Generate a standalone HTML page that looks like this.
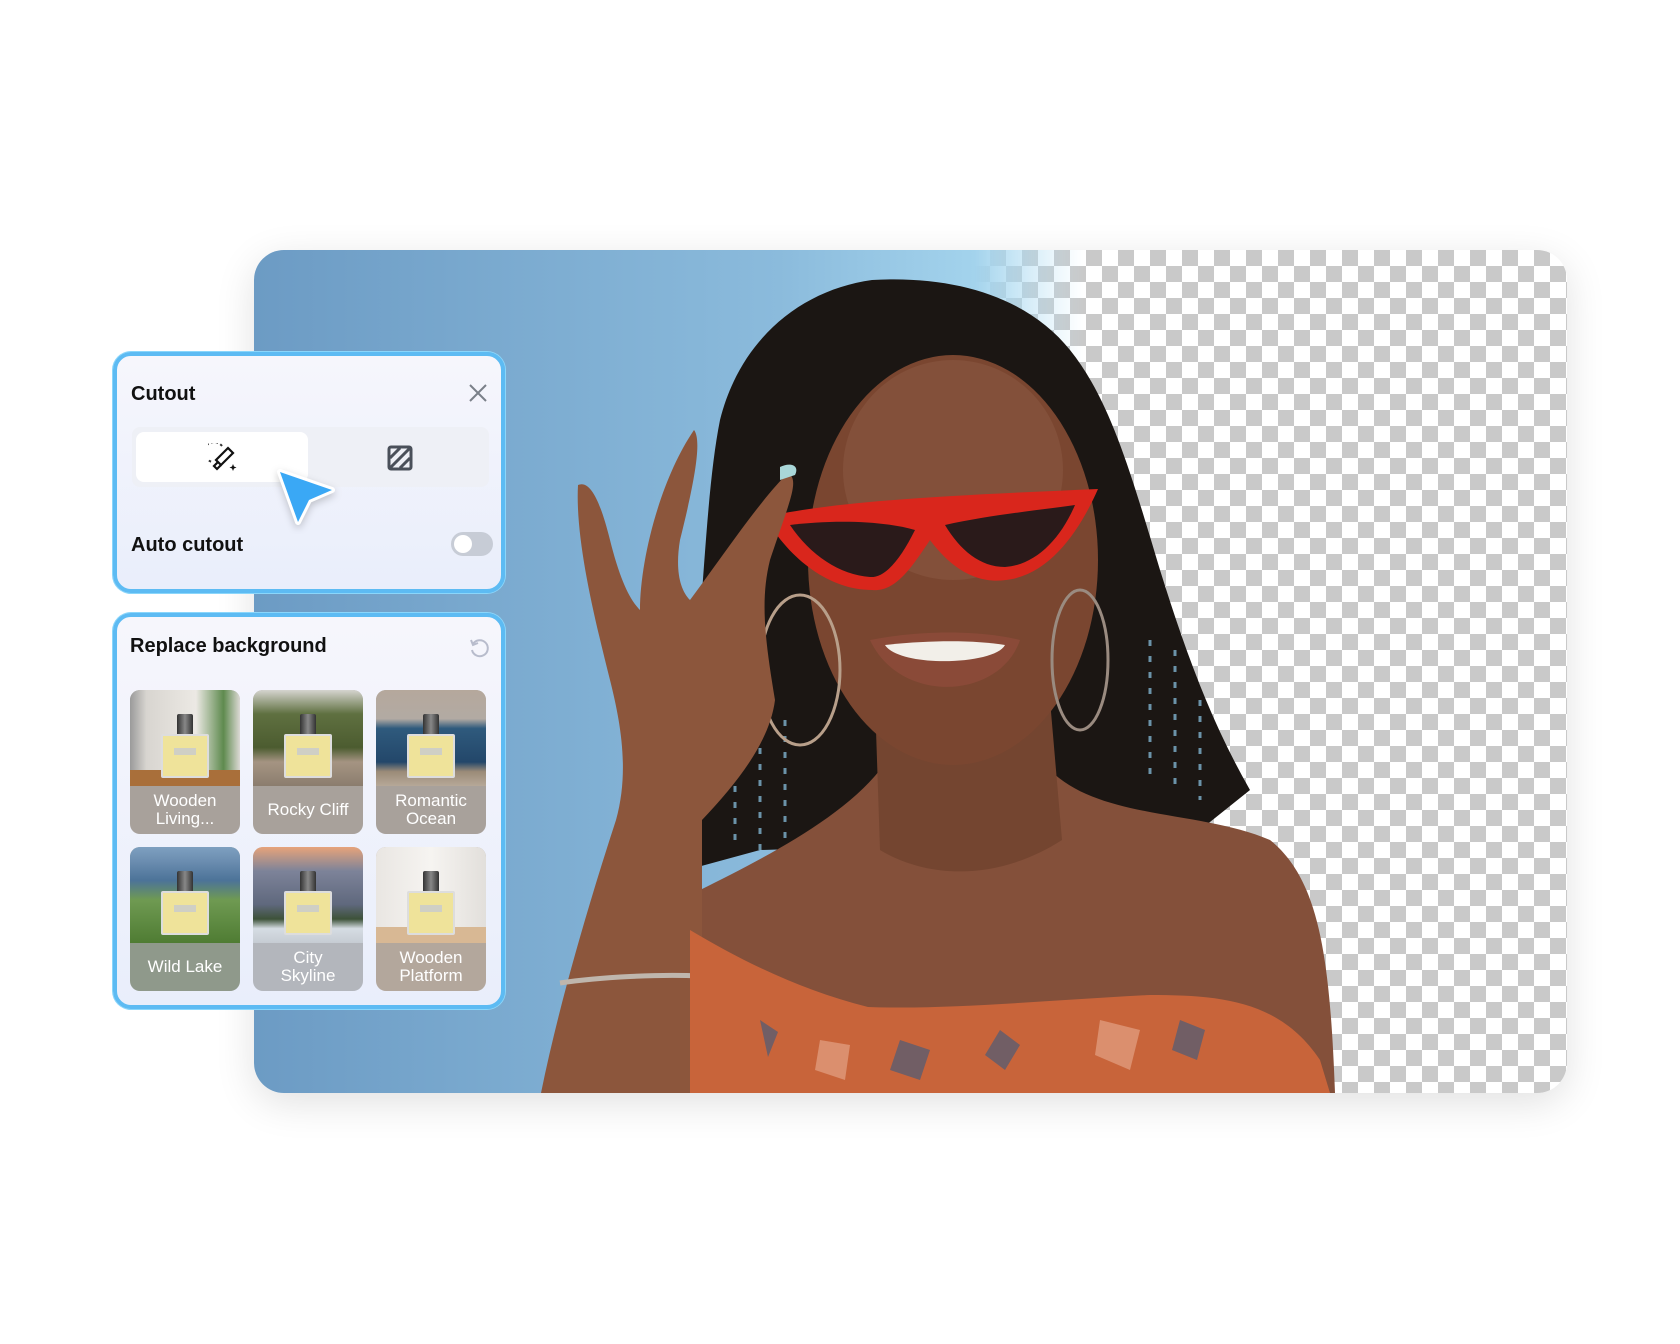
<!DOCTYPE html>
<html><head><meta charset="utf-8"><style>
*{margin:0;padding:0;box-sizing:border-box}
body{width:1680px;height:1344px;background:#fff;position:relative;overflow:hidden;font-family:"Liberation Sans",sans-serif}
.card{position:absolute;left:254px;top:250px;width:1313px;height:843px;border-radius:30px;overflow:hidden;box-shadow:0 10px 40px rgba(0,0,0,.12);
background:linear-gradient(90deg,#6c9bc4 0%,#8bbbdc 40%,#a8d8f0 58%,#c4e6f6 65%,#fff 68%)}
.checker{position:absolute;left:720px;top:0;right:0;bottom:0;
background-color:#fff;background-image:linear-gradient(45deg,#c9c9c9 25%,transparent 25%,transparent 75%,#c9c9c9 75%),linear-gradient(45deg,#c9c9c9 25%,transparent 25%,transparent 75%,#c9c9c9 75%);
background-size:32px 32px;background-position:0 0,16px 16px;
-webkit-mask-image:linear-gradient(90deg,transparent 0,#000 110px);mask-image:linear-gradient(90deg,transparent 0,#000 110px)}
.panel{position:absolute;left:113px;width:392px;border:4px solid #5dbbf3;border-radius:18px;background:linear-gradient(180deg,#f6f6fc,#e9eefb);box-shadow:0 0 0 1px #8ad6fb}
.title{position:absolute;font-size:20px;font-weight:bold;color:#111}
.tile{position:absolute;width:110px;height:144px;border-radius:10px;overflow:hidden;background:#a8a19b}
.tile .img{position:absolute;left:0;top:0;width:110px;height:96px}
.tile .lab{position:absolute;left:0;top:96px;width:110px;height:48px;color:#fff;font-size:17px;line-height:18px;text-align:center;display:flex;align-items:center;justify-content:center}
.bottle{position:absolute;left:31px;top:24px;width:48px;height:64px}
.bottle .cap{position:absolute;left:16px;top:0;width:16px;height:22px;background:linear-gradient(90deg,#333,#888,#333);border-radius:2px}
.bottle .body{position:absolute;left:0;top:20px;width:48px;height:44px;background:#efe39a;border:2px solid #ddd;border-radius:2px}
.bottle .tag{position:absolute;left:11px;top:12px;width:22px;height:7px;background:#cfcfc5}
</style></head><body>
<div class="card">
<div class="checker"></div>
<svg width="1313" height="843" viewBox="254 250 1313 843" style="position:absolute;left:0;top:0">
<!-- hair -->
<path d="M720,420 C740,340 800,290 872,280 C960,275 1030,300 1070,350 C1110,400 1130,470 1160,570 C1185,650 1210,720 1250,790 L1200,830 L1100,840 L760,850 L650,880 L614,880 C630,800 660,700 700,620 C706,540 710,470 720,420Z" fill="#1b1613"/>
<g stroke="#7fb3cf" stroke-width="3" stroke-dasharray="6 10" opacity=".8">
<path d="M735,690 L735,850 M760,700 L760,860 M785,720 L785,860 M1150,640 L1150,780 M1175,650 L1175,790 M1200,700 L1200,800"/>
</g>
<!-- body skin -->
<path d="M560,1093 C600,990 640,920 700,890 C760,860 840,820 880,770 L1050,770 C1100,820 1200,810 1270,840 C1320,880 1330,960 1335,1093Z" fill="#84503a"/>
<!-- neck -->
<path d="M875,700 L1050,700 L1062,840 C1000,880 930,880 880,850Z" fill="#744530"/>
<!-- face -->
<ellipse cx="953" cy="560" rx="145" ry="205" fill="#7a4630"/>
<ellipse cx="953" cy="470" rx="110" ry="110" fill="#83503a"/>
<!-- earrings -->
<ellipse cx="800" cy="670" rx="40" ry="75" fill="none" stroke="#b89f8a" stroke-width="3"/>
<ellipse cx="1080" cy="660" rx="28" ry="70" fill="none" stroke="#9a8b80" stroke-width="3"/>
<!-- mouth -->
<path d="M870,640 C920,630 980,630 1020,640 C1000,700 900,705 870,640Z" fill="#8a4a38"/>
<path d="M885,645 C930,640 975,640 1005,645 C995,665 900,668 885,645Z" fill="#f2efe9"/>
<!-- glasses -->
<path d="M765,517 C840,500 960,495 1098,489 C1080,530 1050,575 1006,580 C970,585 945,560 930,540 C910,570 895,592 872,590 C830,590 790,560 765,517Z" fill="#d9261c"/>
<path d="M790,525 C830,520 880,520 915,530 C900,560 885,578 870,577 C840,575 810,555 790,525Z" fill="#2a1a1a"/>
<path d="M945,525 C990,515 1040,510 1075,505 C1060,540 1035,565 1005,567 C980,567 960,550 945,525Z" fill="#2a1a1a"/>
<!-- arm/hand -->
<path d="M541,1093 C560,1000 590,900 616,820 C630,770 620,720 610,680 C595,620 575,540 578,485 C590,480 600,500 610,540 C620,580 630,600 640,610 C640,560 660,480 694,430 C702,440 695,480 680,540 C675,570 680,590 690,600 C720,560 760,500 788,473 C800,480 790,500 770,560 C760,600 765,640 775,700 C770,740 740,780 702,820 L702,1000 L690,1093Z" fill="#8c563c"/>
<path d="M780,467 C790,462 800,465 795,475 L780,480Z" fill="#a9d6d8"/>
<!-- bracelet -->
<path d="M560,983 C600,977 660,974 700,976" stroke="#bfb6ad" stroke-width="5" fill="none"/>
<!-- top -->
<path d="M690,930 C740,960 800,990 868,1007 C950,1010 1050,1000 1150,995 C1220,995 1280,1000 1320,1060 L1330,1093 L690,1093Z" fill="#c8643a"/>
<path d="M900,1040 l30,10 l-10,30 l-30,-10Z M1000,1030 l20,15 l-15,25 l-20,-15Z M1180,1020 l25,10 l-8,30 l-25,-10Z M760,1020 l18,12 l-10,25Z" fill="#4c5b78" opacity=".7"/>
<path d="M1100,1020 l40,10 l-10,40 l-35,-15Z M820,1040 l30,5 l-5,35 l-30,-10Z" fill="#e2a184" opacity=".7"/>
</svg>
</div>

<!-- Cutout panel -->
<div class="panel" style="top:352px;height:241px">
<div class="title" style="left:14px;top:27px">Cutout</div>
<svg style="position:absolute;left:351px;top:27px" width="20" height="20" viewBox="0 0 20 20"><path d="M2,2L18,18M18,2L2,18" stroke="#7a8089" stroke-width="2"/></svg>
<div style="position:absolute;left:15px;top:71px;width:357px;height:60px;background:#eef0f6;border-radius:8px"></div>
<div style="position:absolute;left:19px;top:76px;width:172px;height:50px;background:#fff;border-radius:8px"></div>
<svg style="position:absolute;left:91px;top:87px" width="30" height="30" viewBox="0 0 30 30">
<path d="M14,3 A10,10 0 1 0 5,19" fill="none" stroke="#333" stroke-width="2" stroke-dasharray="2.5 2.5"/>
<path d="M20,5 L25,10 L13,22 L8,17Z" fill="none" stroke="#111" stroke-width="2.2"/>
<path d="M10,19 L6,23 L9,26 L13,22" fill="none" stroke="#111" stroke-width="2.2"/>
<path d="M25,21 l1,2.5 l2.5,1 l-2.5,1 l-1,2.5 l-1,-2.5 l-2.5,-1 l2.5,-1Z" fill="#111"/>
</svg>
<svg style="position:absolute;left:270px;top:89px" width="26" height="26" viewBox="0 0 26 26">
<rect x="2" y="2" width="22" height="22" rx="2" fill="none" stroke="#4a505a" stroke-width="3"/>
<path d="M3,13 L13,3 M3,23 L23,3 M13,23 L23,13" stroke="#4a505a" stroke-width="3"/>
</svg>
<div class="title" style="left:14px;top:178px;font-weight:bold">Auto cutout</div>
<div style="position:absolute;left:334px;top:176px;width:42px;height:24px;border-radius:12px;background:#c7ccd6"></div>
<div style="position:absolute;left:337px;top:179px;width:18px;height:18px;border-radius:9px;background:#fff"></div>
</div>

<!-- Replace background panel -->
<div class="panel" style="top:613px;height:396px">
<div class="title" style="left:13px;top:18px">Replace background</div>
<svg style="position:absolute;left:351px;top:20px" width="22" height="22" viewBox="0 0 22 22"><path d="M5,7 A8,8 0 1 1 4,13" fill="none" stroke="#b8bccc" stroke-width="2"/><path d="M3,3 L5,8 L10,6" fill="none" stroke="#b8bccc" stroke-width="2"/></svg>

<div class="tile" style="left:13px;top:73px"><div class="img" style="background:linear-gradient(90deg,#9a9a9a 0,#d8d5d0 15%,#ece9e4 60%,#5e8a4e 85%,#dcd9d5 100%)"></div><div style="position:absolute;left:0;top:80px;width:110px;height:16px;background:#a96f3a"></div><div class="bottle"><div class="cap"></div><div class="body"><div class="tag"></div></div></div><div class="lab">Wooden<br>Living...</div></div>
<div class="tile" style="left:136px;top:73px"><div class="img" style="background:linear-gradient(180deg,#d5d4cf 0,#5f7040 25%,#4c5c30 60%,#a59482 75%,#8b7d6e 100%)"></div><div class="bottle"><div class="cap"></div><div class="body"><div class="tag"></div></div></div><div class="lab">Rocky Cliff</div></div>
<div class="tile" style="left:259px;top:73px"><div class="img" style="background:linear-gradient(180deg,#b5a89c 0,#b2aaa3 30%,#2f5a7d 40%,#23476a 75%,#9b8b78 85%,#b6a898 100%)"></div><div class="bottle"><div class="cap"></div><div class="body"><div class="tag"></div></div></div><div class="lab">Romantic<br>Ocean</div></div>

<div class="tile" style="left:13px;top:230px;background:#8f998b"><div class="img" style="background:linear-gradient(180deg,#7ea0c0 0,#6b8db0 15%,#4c7398 35%,#6f9a52 55%,#4f7c33 100%)"></div><div class="bottle"><div class="cap"></div><div class="body"><div class="tag"></div></div></div><div class="lab">Wild Lake</div></div>
<div class="tile" style="left:136px;top:230px;background:#b3b6bc"><div class="img" style="background:linear-gradient(180deg,#e7a37a 0,#7d8399 25%,#5f687d 60%,#3d5239 75%,#d5dce3 85%,#c6ccd3 100%)"></div><div class="bottle"><div class="cap"></div><div class="body"><div class="tag"></div></div></div><div class="lab">City<br>Skyline</div></div>
<div class="tile" style="left:259px;top:230px;background:#b3a79c"><div class="img" style="background:linear-gradient(90deg,#e9e6e2,#f6f4f1 50%,#e2dfdb)"></div><div style="position:absolute;left:0;top:80px;width:110px;height:16px;background:#d8b894"></div><div class="bottle"><div class="cap"></div><div class="body"><div class="tag"></div></div></div><div class="lab">Wooden<br>Platform</div></div>
</div>

<!-- cursor -->
<svg style="position:absolute;left:270px;top:462px" width="76" height="72" viewBox="270 462 76 72">
<path d="M280,472 L332,490 L309,500 L298,522Z" fill="#3aa8f5" stroke="#fff" stroke-width="6" stroke-linejoin="round" style="filter:drop-shadow(0 3px 4px rgba(0,0,0,.2))"/>
<path d="M280,472 L332,490 L309,500 L298,522Z" fill="#3aa8f5"/>
</svg>
</body></html>
